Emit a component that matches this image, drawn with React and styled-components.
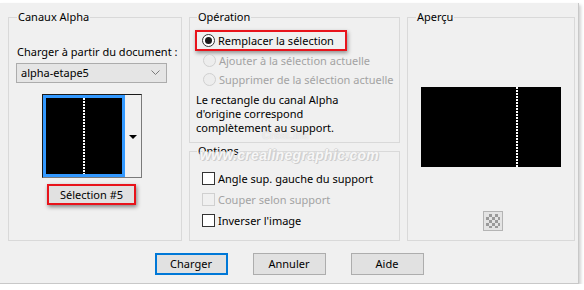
import React from "react";
import styled, { createGlobalStyle } from "styled-components";

const Global = createGlobalStyle`
  html, body { margin: 0; padding: 0; background: #ffffff; }
  body { font-family: "Noto Sans", "Open Sans", sans-serif; font-size: 11px; color: #000; }
  * { box-sizing: border-box; }
`;

const Dialog = styled.div`
  position: relative;
  margin-top: 3px;
  width: 579px;
  height: 281px;
  background: #f0f0f0;
  border-right: 1px solid #c8c8c8;
  border-bottom: 1px solid #c8c8c8;
  box-shadow: 2px 2px 3px rgba(0, 0, 0, 0.18);
  padding: 6px 0 0 8px;
  font-family: "Noto Sans", "Open Sans", sans-serif;
  font-size: 11px;
  overflow: hidden;
`;

const Columns = styled.div`
  display: grid;
  grid-template-columns: 174px 211px 168px;
  column-gap: 7px;
  align-items: start;
`;

const Stack = styled.div`
  display: flex;
  flex-direction: column;
`;

const Group = styled.fieldset`
  margin: 0;
  min-width: 0;
  height: ${(p) => p.$h}px;
  border: 1px solid #d9d9d9;
  padding: 0 ${(p) => p.$px ?? 7}px;
  display: flex;
  flex-direction: column;
  align-items: ${(p) => p.$align || "flex-start"};
`;

const Legend = styled.legend`
  padding: 0 1px;
  margin-left: 1px;
  line-height: 16px;
  color: #000;
`;

const Label = styled.div`
  align-self: flex-start;
  margin: 19px 0 0 1px;
  line-height: 16px;
  white-space: nowrap;
`;

const LeftContent = styled.div`
  width: 151px;
  display: flex;
  flex-direction: column;
  align-items: center;
`;

const Select = styled.div`
  align-self: stretch;
  margin-top: 3px;
  height: 20px;
  background: #e5e5e5;
  border: 1px solid #acacac;
  display: flex;
  align-items: center;
  justify-content: space-between;
  padding: 0 6px 0 4px;
  line-height: 16px;
`;

const ThumbBox = styled.div`
  margin-top: 11px;
  width: 100px;
  height: 84px;
  display: flex;
  border: 1px solid;
  border-color: #1a1a1a #7a7a7a #7a7a7a #1a1a1a;
  background: #f0f0f0;
`;

const Tile = styled.div`
  width: 82px;
  height: 82px;
  background: #000;
  border: 3px solid #3399ff;
  display: flex;
  justify-content: center;
`;

const DotLine = styled.div`
  width: 2px;
  height: 100%;
  background: repeating-linear-gradient(to bottom, #ffffff 0 2px, #000 2px 3px);
`;

const ArrowPart = styled.div`
  flex: 1;
  display: flex;
  align-items: center;
  justify-content: center;
  padding-top: 2px;
`;

const Triangle = styled.div`
  width: 0;
  height: 0;
  border-left: 4px solid transparent;
  border-right: 4px solid transparent;
  border-top: 4px solid #000;
`;

const SelBox = styled.div`
  margin-top: 6px;
  width: 89px;
  height: 21px;
  border: 2px solid #e8131b;
  background: #e1e1e1;
  box-shadow: 1px 2px 4px rgba(0, 0, 0, 0.45);
  display: flex;
  align-items: center;
  justify-content: center;
  line-height: 16px;
`;

const Highlight = styled.div`
  margin-top: 5px;
  margin-left: -1px;
  width: 152px;
  height: 21px;
  border: 2px solid #e8131b;
  box-shadow: 1px 2px 4px rgba(0, 0, 0, 0.4);
  display: flex;
  align-items: center;
  padding-left: 5px;
`;

const RadioRow = styled.div`
  height: 19px;
  display: flex;
  align-items: center;
  padding-left: ${(p) => (p.$flush ? 0 : 7)}px;
  gap: 3px;
  white-space: nowrap;
  line-height: 16px;
  color: ${(p) => (p.$disabled ? "#a3a3a3" : "#000")};
`;

const Radio = styled.span`
  width: 13px;
  height: 13px;
  border-radius: 50%;
  border: 1px solid ${(p) => (p.$disabled ? "#d0d0d0" : "#333")};
  background: ${(p) => (p.$disabled ? "#ededed" : "#fff")};
  display: flex;
  align-items: center;
  justify-content: center;
  flex: none;
  &::after {
    content: "";
    width: 7px;
    height: 7px;
    border-radius: 50%;
    background: #1a1a1a;
    display: ${(p) => (p.$checked ? "block" : "none")};
  }
`;

const Note = styled.div`
  margin-top: 4px;
  line-height: 14px;
`;

const CheckRow = styled.div`
  height: 21px;
  display: flex;
  align-items: center;
  padding-left: 6px;
  gap: 3px;
  white-space: nowrap;
  line-height: 16px;
  color: ${(p) => (p.$disabled ? "#a3a3a3" : "#000")};
  &:first-of-type { margin-top: 9px; }
`;

const Check = styled.span`
  width: 13px;
  height: 13px;
  flex: none;
  border: 1px solid ${(p) => (p.$disabled ? "#d0d0d0" : "#333")};
  background: ${(p) => (p.$disabled ? "#f0f0f0" : "#fff")};
`;

const Preview = styled.div`
  margin-top: 62px;
  width: 140px;
  height: 80px;
  background: #000;
  display: flex;
  padding-left: 95px;
`;

const Checker = styled.div`
  margin-top: 44px;
  margin-left: 4px;
  width: 20px;
  height: 20px;
  border: 1px solid #b4b4b4;
  padding: 2px;
  background: #e4e4e4;
  &::before {
    content: "";
    display: block;
    width: 100%;
    height: 100%;
    background: repeating-conic-gradient(#9a9a9a 0 25%, #e4e4e4 0 50%) 0 0 / 6px 6px;
  }
`;

const ButtonRow = styled.div`
  margin-top: 12px;
  display: flex;
  justify-content: center;
  gap: 25px;
  padding-right: 8px;
`;

const Button = styled.button`
  width: 73px;
  height: 22px;
  padding: 0;
  font: inherit;
  line-height: 16px;
  color: #000;
  background: #e1e1e1;
  border: ${(p) => (p.$default ? "2px solid #0078d7" : "1px solid #adadad")};
`;

const Watermark = styled.div`
  position: absolute;
  left: 200px;
  top: 144px;
  font-family: "Liberation Sans", "DejaVu Sans", sans-serif;
  font-weight: bold;
  font-style: italic;
  font-size: 14px;
  letter-spacing: 0.3px;
  color: #f7f7f7;
  text-shadow: 1px 1px 0 #cdcdcd, -1px 0 0 #d6d6d6, 0 -1px 0 #dcdcdc, 1px 0 0 #d0d0d0;
  pointer-events: none;
`;

const WatermarkSmall = styled.div`
  position: absolute;
  left: 262px;
  top: 126px;
  font-family: "Liberation Sans", sans-serif;
  font-weight: bold;
  font-size: 11px;
  color: rgba(255, 255, 255, 0.55);
  text-shadow: 0 0 1px rgba(150, 150, 150, 0.35);
  pointer-events: none;
`;

const Chevron = () => (
  <svg width="9" height="6" viewBox="0 0 9 6">
    <path d="M0.5 0.5 L4.5 4.5 L8.5 0.5" fill="none" stroke="#7a7a7a" strokeWidth="1" />
  </svg>
);

export default function App() {
  return (
    <>
      <Global />
      <Dialog>
        <Columns>
          <Group $h={232}>
            <Legend>Canaux Alpha</Legend>
            <LeftContent>
              <Label>Charger à partir du document :</Label>
              <Select>
                <span>alpha-etape5</span>
                <Chevron />
              </Select>
              <ThumbBox>
                <Tile>
                  <DotLine />
                </Tile>
                <ArrowPart>
                  <Triangle />
                </ArrowPart>
              </ThumbBox>
              <SelBox>Sélection #5</SelBox>
            </LeftContent>
          </Group>

          <Stack>
            <Group $h={134} $px={6}>
              <Legend>Opération</Legend>
              <Highlight>
                <RadioRow $flush>
                  <Radio $checked />
                  Remplacer la sélection
                </RadioRow>
              </Highlight>
              <RadioRow $disabled>
                <Radio $disabled />
                Ajouter à la sélection actuelle
              </RadioRow>
              <RadioRow $disabled>
                <Radio $disabled />
                Supprimer de la sélection actuelle
              </RadioRow>
              <Note>
                Le rectangle du canal Alpha
                <br />
                d'origine correspond
                <br />
                complètement au support.
              </Note>
            </Group>
            <Group $h={98} $px={6}>
              <Legend>Options</Legend>
              <CheckRow>
                <Check />
                Angle sup. gauche du support
              </CheckRow>
              <CheckRow $disabled>
                <Check $disabled />
                Couper selon support
              </CheckRow>
              <CheckRow>
                <Check />
                Inverser l'image
              </CheckRow>
            </Group>
          </Stack>

          <Group $h={232} $align="center">
            <Legend>Aperçu</Legend>
            <Preview>
              <DotLine />
            </Preview>
            <Checker />
          </Group>
        </Columns>

        <ButtonRow>
          <Button $default>Charger</Button>
          <Button>Annuler</Button>
          <Button>Aide</Button>
        </ButtonRow>

        <WatermarkSmall>CréaLine</WatermarkSmall>
        <Watermark>www.crealinegraphic.com</Watermark>
      </Dialog>
    </>
  );
}
